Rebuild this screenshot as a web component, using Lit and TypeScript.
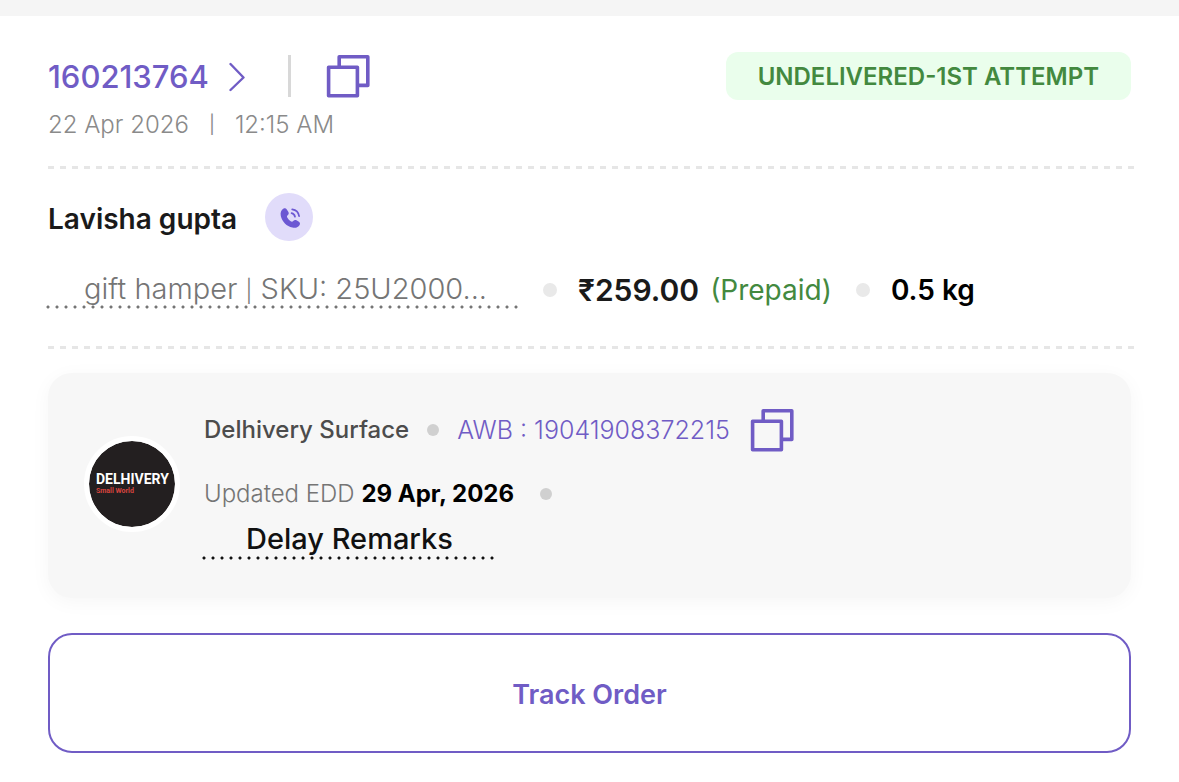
import { LitElement, html, css, svg } from "lit";
import { customElement, property } from "lit/decorators.js";

@customElement("copy-button")
class CopyButton extends LitElement {
  @property() label = "Copy";

  static styles = css`
    :host {
      display: block;
      flex: none;
    }
    .copy {
      display: block;
      padding: 0;
      border: 0;
      background: none;
      color: #705cc5;
      cursor: pointer;
    }
    .icon {
      display: block;
      width: 44px;
      height: 44px;
    }
  `;

  render() {
    return html`<button class="copy" type="button" aria-label=${this.label}>
      <svg class="icon" viewBox="0 0 44 44" fill="none" stroke="currentColor" stroke-width="3.6" stroke-linejoin="round">
        ${svg`<path d="M13.2 13.5V2.8h28.6v28.6H32" /><rect x="2.6" y="13.3" width="28.8" height="28.4" />`}
      </svg>
    </button>`;
  }
}

@customElement("app-root")
class AppRoot extends LitElement {
  static styles = css`
    :host {
      display: block;
      font-family: Inter, "Noto Sans", sans-serif;
      color: #1a1a1a;
      background: #fff;
      border-top: 16px solid #f5f5f5;
    }
    * {
      box-sizing: border-box;
    }
    a {
      color: inherit;
      text-decoration: none;
    }
    .order {
      padding: 36px 48px 28px;
    }
    .header,
    .customer,
    .summary,
    .courier,
    .edd {
      display: flex;
      align-items: center;
    }
    .header {
      height: 48px;
    }
    .number {
      display: flex;
      align-items: center;
      gap: 20px;
      padding-top: 2px;
      font-size: 31px;
      line-height: 36px;
      font-weight: 500;
      color: #705cc5;
    }
    .chevron {
      width: 16px;
      height: 30px;
    }
    .bar {
      width: 3px;
      height: 42px;
      margin: 0 35px 0 43px;
      background: #d8d8d8;
    }
    .badge {
      margin-left: auto;
      padding: 1px 32px 0;
      border-radius: 12px;
      background: #eafeec;
      color: #43893f;
      font-size: 24px;
      line-height: 47px;
      font-weight: 600;
      white-space: nowrap;
    }
    .date {
      display: flex;
      gap: 20px;
      margin-top: 9px;
      font-size: 24px;
      line-height: 32px;
      font-weight: 300;
      color: #8a8a8a;
    }
    .date .pipe {
      font-size: 18px;
      font-weight: 400;
    }
    .rule {
      height: 3px;
      margin: 25px -3px 24px 0;
      border: 0;
      background: repeating-linear-gradient(90deg, #e6e6e6 0 6px, transparent 6px 12px);
    }
    .name {
      margin: 0;
      padding-top: 4px;
      font-size: 28px;
      line-height: 36px;
      font-weight: 600;
    }
    .call {
      display: grid;
      place-items: center;
      width: 48px;
      height: 48px;
      margin-left: 28px;
      padding: 2px 0 0 2px;
      border: 0;
      border-radius: 50%;
      background: #e1dcfa;
      color: #6c58d3;
      cursor: pointer;
    }
    .call svg {
      width: 22px;
      height: 22px;
    }
    .dotted {
      padding-bottom: 2px;
      background: radial-gradient(circle at 2px 2px, currentColor 1px, transparent 2px) left bottom / 9px 4px repeat-x;
      white-space: nowrap;
    }
    .summary {
      margin: 30px 0 37px;
      font-size: 28px;
      line-height: 36px;
    }
    .product {
      margin-left: -2px;
      padding-left: 38px;
      padding-right: 32px;
      font-size: 29px;
      font-weight: 300;
      color: #757575;
    }
    .product .pipe {
      font-size: 22px;
      line-height: 22px;
    }
    .dot {
      flex: none;
      width: 14px;
      height: 14px;
      border-radius: 50%;
      background: #e9e9e9;
    }
    .summary .dot {
      margin: 0 21px 0 24px;
    }
    .price {
      font-size: 30px;
      font-weight: 600;
    }
    .mode {
      margin-left: 11px;
      color: #43893f;
    }
    .weight {
      font-weight: 600;
      color: #000;
    }
    .shipment {
      display: flex;
      align-items: center;
      gap: 24px;
      padding: 35px 36px 38px;
      border-radius: 24px;
      background: #f7f7f7;
      box-shadow: 0 4px 20px rgba(0, 0, 0, 0.04);
    }
    .logo {
      flex: none;
      display: flex;
      flex-direction: column;
      justify-content: center;
      width: 96px;
      height: 96px;
      padding-left: 7px;
      border: 5px solid #fff;
      border-radius: 50%;
      background: #231f20;
      background-clip: padding-box;
      font-family: Roboto, "Liberation Sans", sans-serif;
      font-weight: 700;
      white-space: nowrap;
    }
    .brand {
      font-size: 14px;
      line-height: 14px;
      color: #fff;
    }
    .tagline {
      font-size: 7px;
      line-height: 10px;
      color: #d8453f;
    }
    .details {
      display: flex;
      flex-direction: column;
      align-items: flex-start;
      font-size: 24px;
      line-height: 32px;
    }
    .carrier {
      font-weight: 500;
      color: #4c4c4c;
    }
    .shipment .dot {
      width: 12px;
      height: 12px;
      background: #d0d0d0;
    }
    .courier .dot {
      margin: 0 18px;
    }
    .awb {
      margin-right: 20px;
      font-size: 25px;
      font-weight: 300;
      color: #705cc5;
    }
    .edd {
      gap: 26px;
      margin-top: 26px;
      font-weight: 300;
      color: #757575;
    }
    .edd strong {
      font-weight: 700;
      color: #000;
    }
    .remarks {
      margin: 10px 0 0 -2px;
      padding: 0 44px 2px;
      font-size: 29px;
      line-height: 38px;
      font-weight: 500;
      color: #111;
    }
    .track {
      display: block;
      width: 100%;
      height: 120px;
      margin-top: 35px;
      padding-top: 4px;
      border: 2px solid #705cc5;
      border-radius: 24px;
      background: #fff;
      color: #705cc5;
      font: 600 27px/36px Inter, "Noto Sans", sans-serif;
      cursor: pointer;
    }
  `;

  render() {
    return html`
      <main class="order">
        <header class="header">
          <a class="number" href="#order">
            160213764
            <svg class="chevron" viewBox="0 0 16 30" fill="none" stroke="currentColor" stroke-width="2.4" stroke-linecap="round" stroke-linejoin="round" aria-hidden="true">
              <path d="M1.5 2 14.5 15.5 1.5 28" />
            </svg>
          </a>
          <span class="bar"></span>
          <copy-button label="Copy order number"></copy-button>
          <span class="badge">UNDELIVERED-1ST ATTEMPT</span>
        </header>
        <div class="date"><span>22 Apr 2026</span><span class="pipe">|</span><span>12:15 AM</span></div>
        <hr class="rule" />
        <div class="customer">
          <h1 class="name">Lavisha gupta</h1>
          <button class="call" type="button" aria-label="Call Lavisha gupta">
            <svg viewBox="0 0 22 22" fill="none">
              <path fill="currentColor" d="M4.6 1.6C5.8.9 7 1.1 7.8 2.4L9.4 5c.7 1.2.4 2.3-.7 3.2-.9.8-.9 1.5-.3 2.6.8 1.5 1.9 2.7 3.3 3.5 1 .6 1.8.6 2.5-.3 1-1.2 2.1-1.4 3.3-.7l2.4 1.5c1.2.8 1.4 1.9.7 3.1-1.4 2.4-3.9 3.3-7.2 2.6C7.7 19.4 3 14.7 1.8 9 1.1 5.6 2.2 3 4.6 1.6Z" />
              <path stroke="currentColor" stroke-width="1.7" stroke-linecap="round" d="M12.6 6.2c1.9.4 3 1.6 3.4 3.5M13.2 2.3c3.8.5 6.3 3 6.9 6.800" />
            </svg>
          </button>
        </div>
        <div class="summary">
          <span class="product dotted">gift hamper <span class="pipe">|</span> SKU: 25U2000...</span>
          <span class="dot"></span>
          <span class="price">₹259.00</span>
          <span class="mode">(Prepaid)</span>
          <span class="dot"></span>
          <span class="weight">0.5 kg</span>
        </div>
        <hr class="rule" />
        <section class="shipment">
          <div class="logo"><span class="brand">DELHIVERY</span><span class="tagline">Small World</span></div>
          <div class="details">
            <div class="courier">
              <span class="carrier">Delhivery Surface</span>
              <span class="dot"></span>
              <a class="awb" href="#awb">AWB : 19041908372215</a>
              <copy-button label="Copy AWB number"></copy-button>
            </div>
            <div class="edd">
              <span>Updated EDD <strong>29 Apr, 2026</strong></span>
              <span class="dot"></span>
            </div>
            <div class="remarks dotted">Delay Remarks</div>
          </div>
        </section>
        <button class="track" type="button">Track Order</button>
      </main>
    `;
  }
}
